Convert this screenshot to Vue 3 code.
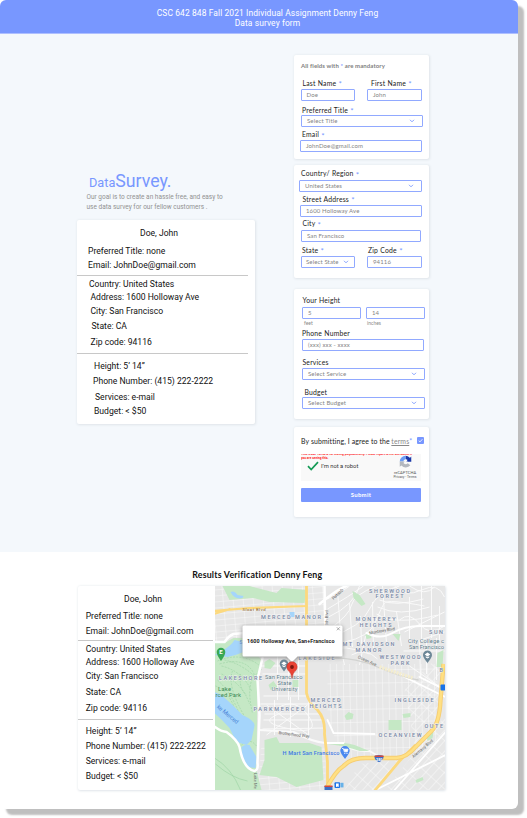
<script setup>
const person = [
  { text: 'Doe, John', kind: 'name' },
  { text: 'Preferred Title: none', kind: 'a' },
  { text: 'Email: JohnDoe@gmail.com', kind: 'a' },
  { kind: 'rule' },
  { text: 'Country: United States', kind: 'b' },
  { text: 'Address: 1600 Holloway Ave', kind: 'c' },
  { text: 'City: San Francisco', kind: 'c' },
  { text: 'State: CA', kind: 'd' },
  { text: 'Zip code: 94116', kind: 'c' },
  { kind: 'rule' },
  { text: 'Height: 5’ 14”', kind: 'e' },
  { text: 'Phone Number: (415) 222-2222', kind: 'f' },
  { text: 'Services: e-mail', kind: 'g' },
  { text: 'Budget: < $50', kind: 'e' },
]
// Neighbourhood captions: text, left edge, baseline, drawn width
const areas = [
  ['MERCED MANOR', 261.5, 618.8, 60], ['LAKESHORE', 219.5, 680, 43],
  ['LAKESIDE', 299, 660.3, 36], ['PARKMERCED', 254, 711.2, 51],
  ['MERCED', 311, 701.8, 30], ['HEIGHTS', 310, 708, 32],
  ['SHERWOOD', 369.5, 592.5, 41], ['FOREST', 376, 598.4, 28],
  ['MONTEREY', 356, 620.5, 40], ['HEIGHTS', 360, 626.5, 32],
  ['MT DAVIDSON', 343, 645.7, 52], ['MANOR', 356, 651.8, 26],
  ['WESTWOOD', 380, 659, 41], ['PARK', 391, 665, 19],
  ['INGLESIDE', 395, 702, 39], ['OCEANVIEW', 379, 737.3, 43],
  ['OUTE', 425, 728, 18.5], ['SUN', 429.5, 633.5, 14], ['B', 440, 672, 4],
]
</script>

<template>
  <div class="page">
    <header class="top">
      <div>CSC 642 848 Fall 2021 Individual Assignment Denny Feng</div>
      <div>Data survey form</div>
    </header>

    <main class="survey">
      <section class="intro">
        <h1 class="brand"><span>Data</span>Survey.</h1>
        <p class="goal">Our goal is to create an hassle free, and easy to<br>use data survey for our fellow customers .</p>
        <div class="card summary">
          <div v-for="(r, i) in person" :key="i" :class="['row', r.kind]">{{ r.text }}</div>
        </div>
      </section>

      <form class="forms">
        <div class="card c1">
          <div class="line note">All fields with&nbsp;<i>*</i>&nbsp;are mandatory</div>
          <div class="line split l1"><label>Last Name <i>*</i></label><label>First Name <i>*</i></label></div>
          <div class="line split s1"><div class="box">Doe</div><div class="box">John</div></div>
          <div class="line n8"><label>Preferred Title <i>*</i></label></div>
          <div class="line n7"><div class="box w122">Select Title<svg class="chev" viewBox="0 0 6 4"><path d="M1 .8 3 2.8 5 .8" /></svg></div></div>
          <div class="line n8"><label>Email <i>*</i></label></div>
          <div class="line n6"><div class="box w122">JohnDoe@gmail.com</div></div>
        </div>

        <div class="card c2">
          <div class="line n7"><label>Country/ Region <i>*</i></label></div>
          <div class="line n5"><div class="box w123">United States<svg class="chev" viewBox="0 0 6 4"><path d="M1 .8 3 2.8 5 .8" /></svg></div></div>
          <div class="line n9"><label>Street Address <i>*</i></label></div>
          <div class="line n6"><div class="box w122">1600 Holloway Ave</div></div>
          <div class="line n9"><label>City <i>*</i></label></div>
          <div class="line n7"><div class="box w120">San Francisco</div></div>
          <div class="line split l2"><label>State <i>*</i></label><label>Zip Code <i>*</i></label></div>
          <div class="line split s1"><div class="box tight">Select State<svg class="chev" viewBox="0 0 6 4"><path d="M1 .8 3 2.8 5 .8" /></svg></div><div class="box">94116</div></div>
        </div>

        <div class="card c3">
          <div class="line n9"><label>Your Height</label></div>
          <div class="line split s3"><div class="box">5</div><div class="box">14</div></div>
          <div class="line split units"><small>feet</small><small>inches</small></div>
          <div class="line n8"><label>Phone Number</label></div>
          <div class="line n8"><div class="box w122">(xxx) xxx - xxxx</div></div>
          <div class="line n9"><label>Services</label></div>
          <div class="line n8"><div class="box w123">Select Service<svg class="chev" viewBox="0 0 6 4"><path d="M1 .8 3 2.8 5 .8" /></svg></div></div>
          <div class="line n10"><label>Budget</label></div>
          <div class="line n8"><div class="box w123">Select Budget<svg class="chev" viewBox="0 0 6 4"><path d="M1 .8 3 2.8 5 .8" /></svg></div></div>
        </div>

        <div class="card c4">
          <div class="agree">
            <span>By submitting, I agree to the</span><u>terms</u><i>*</i>
            <svg class="check" viewBox="0 0 7 7"><rect width="7" height="7" rx="1" fill="#7897ff" /><path d="M1.7 3.6 3 4.9 5.4 2.2" fill="none" stroke="#fff" stroke-width=".8" /></svg>
          </div>
          <div class="captcha">
            <p class="warn">This reCAPTCHA is for testing purposes only. Please report to the site admin if<br>you are seeing this.</p>
            <svg class="tick" viewBox="0 0 12 10"><path d="M1 5.2 4.2 8.5 11 1.2" fill="none" stroke="#159b56" stroke-width="1.7" /></svg>
            <span class="robot">I’m not a robot</span>
            <div class="badge">
              <svg viewBox="0 0 14 14">
                <path d="M7 .7A6.3 6.3 0 0 1 13.2 7H9.6A2.7 2.7 0 0 0 7 4.3Z" fill="#1c3aa9" />
                <path d="M13.2 1.6V7H7.9Z" fill="#1c3aa9" />
                <path d="M.8 7A6.3 6.3 0 0 1 7 .8V4.5A2.6 2.6 0 0 0 4.7 7Z" fill="#6b9df5" />
                <path d="M.8 7H6.2L4.7 8.7A3.1 3.1 0 0 0 9.4 8.8L12.2 11A6.3 6.3 0 0 1 2.6 11.3L.8 12.6Z" fill="#b4b8bf" />
              </svg>
              <b>reCAPTCHA</b>
              <span>Privacy - Terms</span>
            </div>
          </div>
          <button type="button" class="submit">Submit</button>
        </div>
      </form>
    </main>

    <section class="results">
      <h2>Results Verification Denny Feng</h2>
      <div class="card result">
        <div class="summary flat">
          <div v-for="(r, i) in person" :key="i" :class="['row', r.kind]">{{ r.text }}</div>
        </div>
        <svg class="map" viewBox="215.5 586 229.5 204">
          <defs>
            <pattern id="east" width="6.5" height="13" patternUnits="userSpaceOnUse" patternTransform="rotate(-1)"><path d="M0 0V13M0 0H6.5" stroke="#fafafa" stroke-width="1" fill="none" /></pattern>
            <pattern id="west" width="10" height="6" patternUnits="userSpaceOnUse" patternTransform="rotate(-5)"><path d="M0 0V6M0 0H10" stroke="#fafafa" stroke-width="1" fill="none" /></pattern>
            <pattern id="diag" width="7" height="12" patternUnits="userSpaceOnUse" patternTransform="rotate(42)"><path d="M0 0V12M0 0H7" stroke="#fafafa" stroke-width="1.1" fill="none" /></pattern>
          </defs>
          <rect x="215" y="586" width="231" height="204" fill="#e7e7e7" />
          <path d="M215 586H326V655H215ZM262 745H326V790H258Z" fill="url(#west)" />
          <path d="M328 664H438V745L400 757 345 760 328 720Z" fill="url(#east)" />
          <path d="M385 790 446 715V790ZM405 690 440 655 440 710 415 745Z" fill="url(#diag)" />
          <path d="M345 790 360 764 400 760 378 790Z" fill="url(#diag)" />
          <g fill="none" stroke="#fafafa" stroke-width="1">
            <path d="M328 599Q345 590 350 586M328 609Q350 596 364 586M329 617Q355 605 360 586M330 629Q350 615 352 605T377 586M330 637Q362 627 370 609T400 586M345 642Q370 637 376 622T385 603 425 606M380 600Q395 607 424 599M378 607Q400 617 430 607M377 614Q396 626 438 615M395 586Q405 598 422 590T445 597M410 586Q426 597 435 587M400 620Q410 611 420 624T445 626M405 632 445 612M418 641 445 632M328 650Q345 644 370 654M340 643 345 665M352 655Q366 647 378 659M366 636 360 665M410 597V642M422 586V641M432 586V638M440 606V641M397 612 402 646M383 585 387 644M373 602 374 651M361 616 362 644M350 603 353 647M338 590 342 647M404 651H445M420 640 421 678M410 666 445 690M427 641V674M437 638V680" />
            <path d="M261 666H308M263 674H306M278 650V700M289 650V700M299 650V700M264 696H309M261 704 317 704M265 714 320 714M263 729 326 728M275 700V735M309 700V735M267 705 309 735M308 705 267 735M291 697 291 737M278 708Q296 697 309 716T291 729 275 716 278 708M264 720H322" />
            <path d="M260 730 294 732Q313 742 326 743M344 744Q354 752 370 751L382 758" stroke-width="2" />
          </g>
          <g fill="#c5e8c5">
            <path d="M223 586 230 600 253 598 270 602 305 603 307 590 282 588 277 593 250 586Z" />
            <path d="M215 643H225L234 638 244 638 262 660 258 679 257 770 262 790H215Z" />
            <path d="M265 740 277 737 280 743 310 743 322 747 324 780 297 787 277 777 260 775 265 760Z" />
            <path d="M265 662 270 659 276 663 271 669 265 668ZM293 680H299V687H293ZM269 685 274 681 278 687 271 690ZM389 720H402V730H389ZM345 716 349 712 354 714 353 719 347 720ZM393 634H401L399 641ZM438 653 444 650 443 667 437 667ZM353 591 360 595 366 604 362 606 354 598ZM366 635 370 632 372 638 367 639ZM403 714 411 713 411 717 404 718ZM416 780 423 777 424 780 417 783ZM427 736 434 732 433 738 428 741Z" />
            <path d="M328 742Q345 742 355 745L370 751H360Q347 746 328 744Z" />
          </g>
          <g fill="none" stroke="#94d09e" stroke-width=".55" stroke-dasharray="2 1.2">
            <path d="M218 661Q237 653 253 661T255 675Q247 656 220 664M222 666Q243 671 252 691M218 680Q233 694 241 717M222 674Q243 683 250 704M254 676Q247 689 253 713M225 660Q240 663 255 676M216 686Q228 690 235 708M233 671Q227 686 246 718M241 674Q239 688 247 695M242 745Q250 737 257 746" />
            <path d="M215 758Q232 768 241 790M216 764Q232 778 248 781" stroke-dasharray="none" />
          </g>
          <g fill="#a5d5fb">
            <path d="M231 592Q235 590 238 595L244 596 243 598Q235 600 231 592Z" />
            <path d="M224 650Q232 645 235 640L243 642 244 652 236 655 228 657 215 655Z" />
            <path d="M215 692 222 695 233 705 243 715Q256 721 255 726L252 740 247 745 237 742 230 728Q222 719 215 713Z" />
            <path d="M242 747Q246 744 250 745L257 757 256 768 248 767 242 757Z" />
            <path d="M290 612H295V617H290Z" />
          </g>
          <g fill="none" stroke="#fff" stroke-width="2.5" stroke-linecap="round">
            <path d="M214 642H225Q229 636 234 634L245 633M214 726Q222 732 227 732 238 740 240 747 244 769 255 771 259 770 258 763L260 715 258 679 263 658M325 586 326 640M320 604Q338 589 347 586" />
            <path d="M327 743H344M328 720 334 733 375 734M446 690 420 677M401 675 446 697M376 790 446 755M395 790 446 732" stroke-width="1.8" />
            <path d="M367 633Q381 640 393 633T421 626 446 626" stroke-width="2" />
          </g>
          <path d="M328 658Q355 657 378 667T419 680" fill="none" stroke="#d2d3d1" stroke-width="1.3" />
          <path d="M380 667 413 678" fill="none" stroke="#f4edcf" stroke-width="3.5" stroke-dasharray="2 1" />
          <g fill="none" stroke="#fcd97e" stroke-linejoin="round">
            <path d="M214 611 250 608 308 606M214 614 231 609" stroke-width="2.2" />
            <path d="M307 586V693Q309 703 318 710 326 719 325 734L328 762V790M375 791 400 761 416 745" stroke-width="2.8" />
            <path d="M327 788Q336 771 344 766 351 758 366 758H397Q408 757 416 747L432 731Q440 723 441 700L444 664" stroke="#f6cd72" stroke-width="4.4" />
            <path d="M327 788Q336 771 344 766 351 758 366 758H397Q408 757 416 747L432 731Q440 723 441 700L444 664" stroke="#ffe083" stroke-width="2.6" />
          </g>
          <g class="area"><text v-for="(a, i) in areas" :key="i" :x="a[1]" :y="a[2]" :textLength="a[3]">{{ a[0] }}</text></g>
          <g class="place">
            <text x="265.5" y="679.3" textLength="37.5">San Francisco</text><text x="278" y="685.3" textLength="14">State</text><text x="272" y="691.3" textLength="26">University</text>
            <text x="408.5" y="643" textLength="36">City College c</text><text x="409.5" y="649" textLength="35">San Francisco</text>
          </g>
          <g class="park"><text x="218.5" y="691.3" textLength="13">Lake</text><text x="216" y="697.3" textLength="25.5">rced Park</text></g>
          <text class="water" x="217" y="707.5" textLength="26" transform="rotate(40 217 707.5)">ke Merced</text>
          <text class="water" x="240" y="644">S</text>
          <g class="street">
            <text x="243" y="611" textLength="23" fill="#8a5a20">Sloat Blvd</text>
            <text x="279" y="734" textLength="31" transform="rotate(7 279 734)">Brotherhood Way</text>
            <text x="370" y="634.5" textLength="26" transform="rotate(-10 370 634.5)">Monterey Blvd</text>
            <text x="358" y="658" textLength="20" transform="rotate(24 358 658)">Ocean Ave</text>
            <text x="414" y="758" textLength="26" transform="rotate(-40 414 758)">Alemany Blvd</text>
            <text x="334" y="600" textLength="14" transform="rotate(-43 334 600)">Portola D</text>
            <text x="328" y="628" textLength="18" transform="rotate(-90 328 628)">19th Blvd</text>
            <text x="254" y="773" textLength="16" transform="rotate(90 254 773)">Lake Me</text>
          </g>
          <text class="mart" x="283" y="754.8" textLength="57">H Mart San Francisco</text>
          <path d="M345.5 759Q340.8 753 340.8 750.8A4.7 4.7 0 1 1 350.2 750.8Q350.2 753 345.5 759Z" fill="#4a88f0" />
          <path d="M342.5 748.5H343.8L344.8 751.8H347.8L348.5 749.2H344.2" fill="none" stroke="#fff" stroke-width=".8" />
          <path d="M344.4 749.2H348.4L347.8 751.8H345Z" fill="#fff" /><circle cx="345.3" cy="753.3" r=".6" fill="#fff" /><circle cx="347.5" cy="753.3" r=".6" fill="#fff" />
          <path d="M221.5 661Q217.2 655 217.2 652A4.3 4.3 0 1 1 225.8 652Q225.8 655 221.5 661Z" fill="#39a853" />
          <text x="219.8" y="654.4" font-size="6" font-weight="700" fill="#fff">E</text>
          <path d="M284.5 671.5Q280.2 666 280.2 663.8A4.3 4.3 0 1 1 288.8 663.8Q288.8 666 284.5 671.5ZM428 663Q423.5 657.5 423.5 655A4.5 4.5 0 1 1 432.5 655Q432.5 657.5 428 663Z" fill="#6c8797" />
          <path d="M281.8 663.4 284.5 661.6 287.2 663.4 284.5 665.2ZM425.2 654.5 428 652.6 430.8 654.5 428 656.4ZM426.3 656.3V657.5L428 658.5 429.7 657.5V656.3L428 657.2ZM282.8 665V666.2L284.5 667.2 286.2 666.2V665L284.5 666Z" fill="#fff" />
          <path class="bubble" d="M244.5 625.5H341.5Q343 625.5 343 627V655Q343 656.5 341.5 656.5H298L292.5 662 287 656.5H244.5Q243 656.5 243 655V627Q243 625.5 244.5 625.5Z" fill="#fff" />
          <path d="M292.5 678.5Q292 673 288.5 670.2A5.2 5.2 0 1 1 296.5 670.2Q293 673 292.5 678.5Z" fill="#ea4335" stroke="#b9271b" stroke-width=".4" />
          <circle cx="292.5" cy="667" r="1.9" fill="#7d170f" />
          <g><path d="M375 756Q379.5 754 384 756 384.5 760 379.5 762.3 374.5 760 375 756Z" fill="#3d6fc4" /><path d="M375.3 755.5H384V757H375.2Z" fill="#d6483f" /><text x="376.6" y="760.8" font-size="3.6" font-weight="700" fill="#fff">280</text></g>
          <path d="M325 786H333V790H325Z" fill="#3d6fc4" /><path d="M325 785.5H333V787H325Z" fill="#d6483f" />
          <rect x="335" y="782.3" width="5.6" height="5.6" rx="1" fill="#1a73e8" /><rect x="341" y="782.8" width="3" height="4.6" fill="#67b1e8" />
          <path d="M336.5 783.5H339.2V786.4H336.5ZM336.8 786.4H337.5V787.1H336.8ZM338.3 786.4H339V787.1H338.3Z" fill="#fff" />
          <rect x="441" y="684.5" width="5" height="6" rx="1" fill="#1a73e8" />
          <text class="address" x="247.5" y="642.5" textLength="87.5">1600 Holloway Ave, San+Francisco</text>
          <path d="M337.3 627.3 340.3 630.3M340.3 627.3 337.3 630.3" stroke="#777" stroke-width=".6" />
        </svg>
      </div>
    </section>
  </div>
</template>

<style>
html, body { background: #fff; }
body { min-height: 818px; }
</style>

<style scoped>
* { box-sizing: border-box; }
.page { width: 518px; height: 809px; background: #fff; border-radius: 6px; overflow: hidden; box-shadow: 6px 6px 2px #bfbfbf; font-family: Roboto, sans-serif; color: #111; }
.top { height: 33.5px; padding: 7.5px 0 0 17px; background: #7897ff; color: #fff; text-align: center; font-size: 8.45px; line-height: 10.3px; letter-spacing: .1px; border-bottom: 1px solid #aebfff; }
.survey { height: 518.5px; background: #f4f8fc; display: flex; align-items: flex-start; }
.card { background: #fff; border-radius: 2px; box-shadow: .5px .5px 2.5px .5px #dfe4e9; }

.intro { width: 217px; padding: 137px 0 0 77px; flex: none; }
.brand { margin: 0 0 0 12px; height: 20px; font-weight: 400; font-size: 17.7px; line-height: 20px; color: #7897ff; white-space: nowrap; }
.brand span { font-size: 12.7px; }
.goal { margin: 1.8px 0 0 9.5px; height: 27.7px; font-size: 6.5px; line-height: 10px; color: #929292; white-space: nowrap; }
.summary { width: 177.5px; height: 204.5px; display: grid; align-items: end; grid-template-rows: 18.5px 17.5px 14px 6px 13px 13.5px 13.5px 15.5px 16px 7px 16.5px 15px 16px 14px; font-size: 8.6px; line-height: 10px; white-space: nowrap; }
.name { padding-left: 63px; }
.a { padding-left: 11px; }
.b { padding-left: 12px; }
.c { padding-left: 13.5px; }
.d { padding-left: 14.5px; }
.e { padding-left: 17px; }
.f { padding-left: 16px; }
.g { padding-left: 18px; }
.rule { height: 1px; width: 171px; background: #c8c8c8; }

.forms { margin-left: 76.5px; padding-top: 21.5px; font-family: Lato, sans-serif; }
.forms .card { width: 135px; }
.c1, .c2, .c3 { display: grid; align-items: end; align-content: start; }
.c1 { height: 104px; grid-template-rows: 15px 17px 14px 13px 13px 11.5px 13.5px; }
.c2 { height: 113px; margin-top: 6px; grid-template-rows: 12.5px 14.5px 11px 14px 10.5px 14.5px 12px 14px; }
.c3 { height: 130px; margin-top: 11px; grid-template-rows: 15px 15px 7px 11px 14px 15px 14px 16px 13px; }
.c4 { height: 90px; margin-top: 8px; padding: 8.5px 7px 0 7.5px; }
.line { display: flex; white-space: nowrap; }
.line i, .agree i { font-style: normal; color: #7897ff; }
label i { display: inline-block; font-size: 8px; line-height: 6px; vertical-align: -1.5px; }
.note { padding-left: 7.5px; font-size: 6px; line-height: 8px; font-weight: 700; color: #808080; letter-spacing: .11px; }
label { font-size: 6.8px; line-height: 8px; color: #222; letter-spacing: .2px; word-spacing: .3px; }
.split { display: grid; grid-template-columns: 1fr 1fr; }
.l1 { grid-template-columns: 68.5px 1fr; padding-left: 9px; }
.l2 { grid-template-columns: 66px 1fr; padding-left: 8.5px; }
.s1 { grid-template-columns: 54.5px 55px; gap: 12px; padding-left: 7px; }
.s3 { grid-template-columns: 59px 59px; gap: 5px; padding-left: 8.5px; }
.units { grid-template-columns: 63px 1fr; padding-left: 10.5px; }
.units small { font-size: 5px; line-height: 6px; color: #888; }
.n5 { padding-left: 5.5px; } .n6 { padding-left: 6.5px; } .n7 { padding-left: 7.5px; } .n8 { padding-left: 8.5px; } .n9 { padding-left: 9px; } .n10 { padding-left: 11px; }
.box { height: 12px; display: flex; align-items: center; justify-content: space-between; padding: 0 7px 0 5px; border: 1px solid #91a9ff; border-radius: 1px; background: #fff; font-size: 6px; line-height: 8px; color: #858585; letter-spacing: .12px; font-variant-numeric: lining-nums; }
.tight { padding: 0 5px 0 4.5px; }
.w120 { width: 120px; } .w122 { width: 122px; } .w123 { width: 123px; }
.chev { width: 6px; height: 4px; flex: none; fill: none; stroke: #7897ff; stroke-width: .9; }
.agree { height: 10px; display: flex; align-items: center; font-size: 6.9px; color: #222; white-space: nowrap; letter-spacing: .13px; }
.agree u { margin-left: 1.5px; color: #888; }
.check { width: 7px; height: 7px; margin-left: auto; margin-right: -2px; }
.captcha { position: relative; height: 27px; margin-top: 8.5px; width: 120px; background: #f9f9f9; overflow: hidden; }
.warn { position: absolute; left: 0; top: -.6px; margin: 0; font-family: Roboto, sans-serif; font-size: 3.15px; line-height: 3.5px; color: #f22; font-weight: 700; white-space: nowrap; }
.tick { position: absolute; left: 5.5px; top: 6.5px; width: 12px; height: 10px; }
.robot { position: absolute; left: 20px; top: 7.5px; font-family: Roboto, sans-serif; font-size: 5.8px; line-height: 9px; color: #333; }
.badge { position: absolute; right: 3px; top: 1px; width: 26px; display: flex; flex-direction: column; align-items: center; font-family: Roboto, sans-serif; color: #555; white-space: nowrap; }
.badge svg { width: 13px; height: 13px; }
.badge b { margin-top: 1.5px; font-size: 4.1px; line-height: 5px; font-weight: 400; }
.badge span { font-size: 3.4px; line-height: 5px; }
.submit { display: block; width: 120px; height: 14.5px; margin-top: 6.5px; padding: 0; border: 0; border-radius: 1px; background: #7897ff; color: #fff; font: 700 6px/14px Lato, sans-serif; letter-spacing: .25px; }

.results { padding: 16.5px 73px 0 78px; }
.results h2 { margin: 0 0 6.5px -8.5px; height: 11px; font: 700 8.8px/11px Lato, sans-serif; text-align: center; letter-spacing: .2px; color: #111; }
.result { display: flex; width: 366.5px; height: 204px; }
.flat { width: 137px; flex: none; grid-template-rows: 17.5px 17.5px 14.5px 5.5px 12.5px 13.5px 13.5px 16px 16px 7px 16px 15px 15.5px 14.5px; }
.flat .row:not(.name):not(.rule) { padding-left: 7.7px; }
.flat .name { padding-left: 46px; }
.flat .rule { width: 134.5px; }
.map { width: 229.5px; height: 204px; display: block; font-family: Roboto, sans-serif; }
.area { font-size: 5.5px; font-weight: 500; fill: #7787a5; stroke: #f3f3f3; stroke-width: .8; paint-order: stroke; }
.place { font-size: 5.8px; fill: #607d8b; stroke: #f3f3f3; stroke-width: .6; paint-order: stroke; }
.park { font-size: 5.8px; fill: #3c8a55; }
.water { font-size: 5.8px; fill: #4b86d8; }
.street { font-size: 4.2px; fill: #666; }
.mart { font-size: 5.6px; fill: #3c78e6; font-weight: 500; }
.address { font-size: 5.4px; font-weight: 700; fill: #222; }
.bubble { filter: drop-shadow(0 1px 2px #888); }
</style>
